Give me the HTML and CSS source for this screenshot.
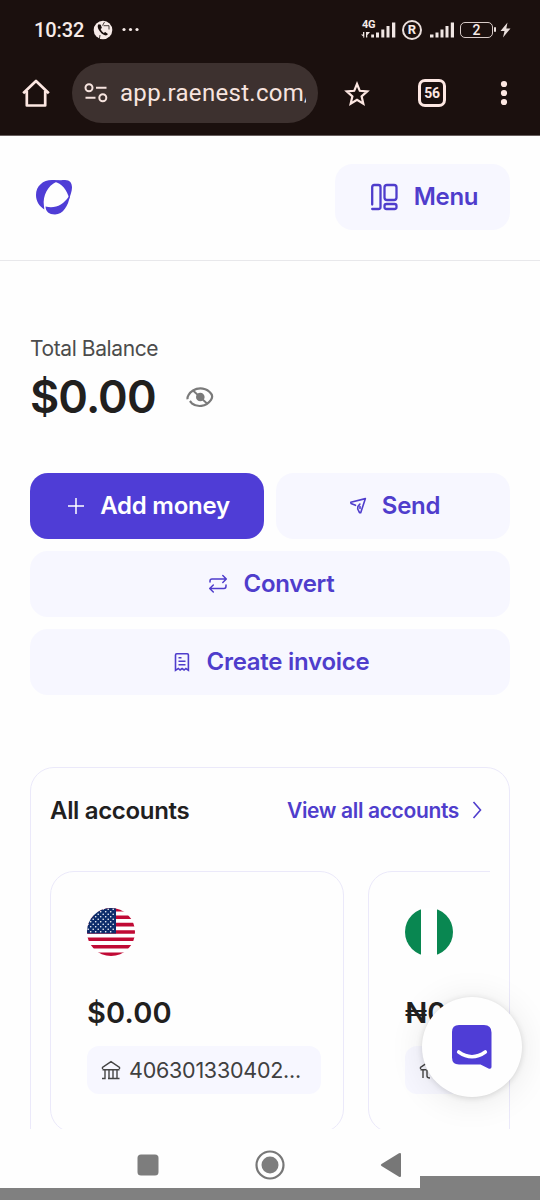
FILE: index.html
```
<!DOCTYPE html>
<html lang="en">
<head>
<meta charset="utf-8">
<title>Raenest</title>
<link rel="stylesheet" href="styles.css">
</head>
<body>
<div class="phone">
  <div class="status-bar">
    <span class="clock">10:32</span>
    <svg class="call-icon" width="20" height="20" viewBox="0 0 20 20"><circle cx="10" cy="10" r="9.3" fill="#f7ebe8"/><path d="M5.600 4.300c-1.300 1-1.200 3.200.3 5.700s3.800 4.800 6 5.300c1.500.3 2.600-.3 3-1.300l-2.700-2-1.500.9c-1.500-.9-2.600-2.300-3.100-3.800l1.300-1.200-1.100-3.200z" fill="#1b100e"/><path d="M9.500 5.500l2-3.500M10.500 5.700h5.500v3.800M7 15l-.6 4" stroke="#1b100e" stroke-width=".8" fill="none"/></svg>
    <svg class="dots-icon" width="20" height="6" viewBox="0 0 20 6" fill="#f7ebe8"><circle cx="3" cy="2.500" r="1.600"/><circle cx="9.500" cy="2.500" r="1.600"/><circle cx="16" cy="2.500" r="1.600"/></svg>
    <div class="indicators">
      <span class="network">
        <span class="network-label">4G</span>
        <svg width="35" height="18" viewBox="0 0 35 18" fill="#f0e6e3"><path d="M2 11h1.300v5.500H2zM0 13.500h3.300v3zM5 11h1.300v5.500H5zM5 11h4L6 14.500zM10.200 13.500h2.800v3h-2.800zM15 11.500h3v5h-3zM20.300 8.500h3v8h-3zM25.500 5h3v11.500h-3zM31 1.500h3.300v15H31z"/></svg>
      </span>
      <span class="roaming">R</span>
      <svg width="25" height="18" viewBox="0 0 25 18" fill="#f0e6e3"><path d="M0 13.500h3.500v3H0zM5.500 11.500h3v5h-3zM10.500 8.500h3v8h-3zM15.500 5h3v11.500h-3zM20.800 1.500H24v15h-3.200z"/></svg>
      <span class="battery">2</span>
      <svg class="bolt" width="11" height="16" viewBox="0 0 11 16"><path d="M7.500.5L.5 9h4L3 15.500 10.500 6.500H6.300z" fill="#e9dedb"/></svg>
    </div>
  </div>

  <div class="browser-bar">
    <svg class="home-icon" width="28" height="28" viewBox="0 0 28 28" fill="none" stroke="#fde7e2" stroke-width="2.700" stroke-linejoin="round"><path d="M1.200 14.300L14 2l12.800 12.300M4.800 12v14.500h18.400V12"/></svg>
    <div class="address">
      <svg width="24" height="20" viewBox="0 0 24 20" fill="none" stroke="#f7e4df" stroke-width="2"><circle cx="5" cy="4.700" r="3.500"/><path d="M12 4.700h10.500M1.500 14.800h10"/><circle cx="18.800" cy="14.800" r="3.500"/></svg>
      <span class="url">app.raenest.com/</span>
    </div>
    <svg class="star-icon" width="26" height="26" viewBox="0 0 26 26" fill="none" stroke="#fde7e2" stroke-width="2.200"><path d="M13 4l2.800 6.800 7.400.6-5.600 4.900 1.700 7.300-6.300-3.900-6.300 3.900 1.700-7.300-5.600-4.900 7.400-.6z"/></svg>
    <span class="tabs">56</span>
    <svg class="more-icon" width="8" height="26" viewBox="0 0 8 26" fill="#fde7e2"><circle cx="4" cy="4" r="3.100"/><circle cx="4" cy="13" r="3.100"/><circle cx="4" cy="22" r="3.100"/></svg>
  </div>

  <div class="page">
    <header class="site-header">
      <svg class="logo" width="38" height="38" viewBox="0 0 38 38" fill="#4f3dd6"><path d="M9.300 31.500C4 28 1 23 1 17 1 8 8 2 17 2c5 0 7 .7 11 .2L21 4C13 7.500 7.500 18 8.900 27.500z"/><path d="M18 2.200C25 3 26 1.900 30 2c5 0 7 3 7 7.500 0 4-2 8-2.600 11.500C32 12 27 5 19 3.700z"/><path d="M34.800 18C33.500 27.500 28 36.500 20 36.500c-6 0-9.200-2.800-9.500-8C20 31 28 27 33.800 18.500z"/></svg>
      <button class="menu">
        <svg width="28" height="28" viewBox="0 0 28 28" fill="none" stroke="#4f3dcc" stroke-width="2.300" stroke-linejoin="round" stroke-linecap="round"><path d="M2.200 21.500V4q0-2 2-2h4.300q2 0 2 2v20q0 2-2 2H2.200"/><rect x="14.500" y="2" width="12" height="15" rx="2.500"/><rect x="14.500" y="21" width="12" height="5" rx="2"/></svg>
        <span>Menu</span>
      </button>
    </header>

    <main class="content">
      <div class="balance-label">Total Balance</div>
      <div class="balance-row">
        <span class="balance">$0.00</span>
        <svg width="28" height="22" viewBox="0 0 28 22" fill="none" stroke="#7a7a7a" stroke-width="2.200"><path d="M1.600 13.300C1 11 3 7 7 4.500 13 .8 21 2 25 7.500q2.300 3 0 6.300C20 21 11 21.500 5.800 17.300L3.900 15"/><path d="M7 4.500L21 17.500" stroke-width="1.800"/><circle cx="14.300" cy="11" r="4.300" fill="#7a7a7a" stroke="none"/></svg>
      </div>

      <div class="actions">
        <button class="action primary"><svg width="18" height="18" viewBox="0 0 18 18" fill="none" stroke="#fff" stroke-width="1.500"><path d="M9 1v16M1 9h16"/></svg><span>Add money</span></button>
        <button class="action send"><svg width="18" height="18" viewBox="0 0 18 18" fill="none" stroke="#4f3dcc" stroke-width="1.600" stroke-linejoin="round" stroke-linecap="round"><path d="M6.500 8.300L2 6.400 1.800 5.200 16.400 1.600 11.700 15.700h-1.200L8.700 12l.2-2.500 2-2.500M11 9.500v2"/></svg><span>Send</span></button>
        <button class="action wide"><svg width="20" height="20" viewBox="0 0 20 20" fill="none" stroke="#4f3dcc" stroke-width="1.500" stroke-linecap="round" stroke-linejoin="round"><path d="M2 8V7q0-2 2-2h14M14.800 1.500L18.300 5l-3.500 3.500M18 11v1q0 2.500-2 2.500H2M5.300 11l-3.600 3.500L5.300 18"/></svg><span>Convert</span></button>
        <button class="action wide"><svg width="18" height="20" viewBox="0 0 18 20" fill="none" stroke="#4f3dcc" stroke-width="1.600"><path d="M2.500 18.300V3q0-1.200 1.200-1.200h10.500q1.200 0 1.200 1.200v15.300l-2.500-1.800-1.800 1.500-2-1.500-2 1.500-1.800-1.500zM5.500 5.700h3M5.500 9.200h7M5.500 12.700h7"/></svg><span>Create invoice</span></button>
      </div>

      <section class="accounts">
        <div class="accounts-head">
          <h2>All accounts</h2>
          <a class="view-all"><span>View all accounts</span><svg width="12" height="20" viewBox="0 0 12 20" fill="none" stroke="#4f3dcc" stroke-width="1.600"><path d="M1.500 2l7 8-7 8"/></svg></a>
        </div>
        <div class="cards">
          <article class="card">
            <svg class="flag" width="48" height="48" viewBox="0 0 48 48">
              <defs><clipPath id="round"><circle cx="24" cy="24" r="24"/></clipPath><pattern id="stars" width="5" height="5" patternUnits="userSpaceOnUse"><circle cx="1.200" cy="1.200" r=".8" fill="#fff"/><circle cx="3.700" cy="3.700" r=".8" fill="#fff"/></pattern></defs>
              <g clip-path="url(#round)"><path fill="#fff" d="M0 0h48v48H0z"/><path stroke="#c00a35" stroke-width="3.600" d="M0 1.800h48M0 9.200h48M0 16.600h48M0 24h48M0 31.300h48M0 38.700h48M0 46.200h48"/><path fill="#0d2c6b" d="M0 0h29v25.500H0z"/><path fill="url(#stars)" d="M0 0h28v25H0z"/></g>
            </svg>
            <div class="amount">$0.00</div>
            <div class="number"><svg width="20" height="20" viewBox="0 0 20 20" fill="none" stroke="#454545" stroke-width="1.400"><path d="M1.500 9V7.300L10 1.700l8.500 5.600V9M1.500 9.700h17M4 10v8M8 10v8M12 10v8M16 10v8M1 18.500h3.700M7 18.500h11.500"/></svg><span>406301330402...</span></div>
          </article>
          <article class="card">
            <svg class="flag" width="48" height="48" viewBox="0 0 48 48"><g clip-path="url(#round)"><path fill="#fff" d="M0 0h48v48H0z"/><path fill="#098751" d="M0 0h16v48H0zM32 0h16v48H32z"/></g></svg>
            <div class="amount">₦0.00</div>
            <div class="number"><svg width="20" height="20" viewBox="0 0 20 20" fill="none" stroke="#454545" stroke-width="1.400"><path d="M1.500 9V7.300L7 3.700M1.500 9.700h6M4 10v8M8 10v6q0 2 3 2"/></svg></div>
          </article>
        </div>
      </section>
    </main>

    <div class="chat"><svg width="42" height="46" viewBox="0 0 42 46"><path fill="#4f3dd6" d="M8 1h25q7.500 0 7.500 7.500V43q0 2.300-2.500 1.700L29.500 40.500H8Q1 40.500 1 33.500V8Q1 1 8 1z"/><path d="M7.700 28q13.300 9.500 26.600 0" fill="none" stroke="#fff" stroke-width="3.600" stroke-linecap="round"/></svg></div>
  </div>

  <nav class="system-nav">
    <svg width="22" height="22" viewBox="0 0 22 22"><rect x=".5" y=".5" width="21" height="21" rx="3.500" fill="#7d7d7d"/></svg>
    <svg width="30" height="30" viewBox="0 0 30 30"><circle cx="15" cy="15" r="13.500" fill="none" stroke="#777" stroke-width="2.200"/><circle cx="15" cy="15" r="8.500" fill="#7d7d7d"/></svg>
    <svg width="22" height="26" viewBox="0 0 22 26"><path d="M1.500 12L19 1.300q2-1 2 1v21.400q0 2-2 1L1.500 14q-1.500-1 0-2z" fill="#777"/></svg>
  </nav>
  <div class="bottom-edge"><span></span></div>
</div>
</body>
</html>
```

FILE: styles.css
```
* { box-sizing: border-box; }
body { margin: 0; background: #fefefe; font-family: Inter, "Liberation Sans", sans-serif; }
button { border: 0; padding: 0; font: inherit; }
svg { display: block; flex: none; }
.phone { width: 540px; height: 1200px; overflow: hidden; display: flex; flex-direction: column; }

.status-bar { height: 60px; flex: none; background: #1b100e; color: #f7ebe8; display: flex; align-items: center; padding: 0 29px 0 34px; font-family: Roboto, sans-serif; }
.clock { font-size: 20px; font-weight: 500; width: 59px; letter-spacing: -.1px; }
.dots-icon { margin-left: 8px; }
.indicators { margin-left: auto; display: flex; align-items: center; }
.network { width: 35px; margin-right: 6px; position: relative; }
.network-label { position: absolute; left: 1px; top: -2px; font-size: 11px; line-height: 12px; font-weight: 700; letter-spacing: -.3px; }
.roaming { width: 20px; height: 20px; border: 2px solid #e9dedb; border-radius: 50%; font-size: 13px; line-height: 16px; font-weight: 700; text-align: center; margin-right: 8px; }
.battery { position: relative; width: 33px; height: 16px; border: 1.500px solid #d8cbc8; border-radius: 5px; font-size: 14px; line-height: 14px; font-weight: 500; text-align: center; margin: 0 7px 0 5px; }
.battery::after { content: ""; position: absolute; right: -4px; top: 4px; width: 2px; height: 5px; background: #e9dedb; border-radius: 1px; }

.browser-bar { height: 76px; flex: none; background: #1b100e; border-bottom: 1px solid #675e5d; display: flex; align-items: center; padding: 0 32px 9px 22px; }
.address { width: 246px; height: 60px; margin-left: 22px; border-radius: 30px; background: #3d312f; display: flex; align-items: center; padding: 0 11px 0 12px; gap: 12px; }
.url { color: #f7e4df; font-family: Roboto, sans-serif; font-size: 24px; line-height: 34px; letter-spacing: .3px; width: 186px; overflow: hidden; white-space: nowrap; }
.star-icon { margin-left: 26px; }
.tabs { margin-left: 48px; width: 28px; height: 28px; border: 3px solid #fde7e2; border-radius: 7px; color: #fde7e2; font: 700 14px/23px Roboto, sans-serif; text-align: center; letter-spacing: -.3px; }
.more-icon { margin-left: 54px; }

.page { height: 993px; flex: none; overflow: hidden; position: relative; }
.site-header { height: 125px; border-bottom: 1px solid #e8e8eb; display: flex; align-items: center; justify-content: space-between; padding: 0 30px 2px 35px; }
.menu { width: 175px; height: 66px; border-radius: 18px; background: #f7f7ff; color: #4f3dcc; display: flex; align-items: center; justify-content: center; gap: 16px; font-size: 24px; font-weight: 600; letter-spacing: -.3px; padding: 0 0 1px 3px; }
.content { padding: 73px 30px 0; }
.balance-label { font-size: 21px; line-height: 30px; letter-spacing: -.4px; color: #4c4c4c; }
.balance-row { display: flex; align-items: center; gap: 30px; height: 66px; }
.balance { font-size: 45px; font-weight: 600; line-height: 66px; letter-spacing: -.9px; color: #21201e; }
.actions { display: grid; grid-template-columns: 234px 234px; gap: 12px; margin-top: 43px; }
.action { height: 66px; border-radius: 18px; background: #f7f7ff; color: #4f3dcc; display: flex; align-items: center; justify-content: center; gap: 15px; font-size: 24px; font-weight: 600; letter-spacing: -.26px; padding: 0 0 1px 3px; }
.primary { background: #4f3dd6; color: #fff; }
.wide { grid-column: span 2; }

.accounts { margin-top: 72px; height: 420px; border: 1.500px solid #ebe9fa; border-radius: 24px; padding: 0 19px; }
.accounts-head { height: 86px; display: flex; align-items: center; justify-content: space-between; padding: 0 6px 2px 0; }
.accounts h2 { margin: 0; font-size: 24px; font-weight: 600; letter-spacing: -.33px; color: #21201e; }
.view-all { display: flex; align-items: center; gap: 13px; color: #4f3dcc; font-size: 21px; font-weight: 600; letter-spacing: -.35px; }
.cards { display: flex; gap: 24px; margin-top: 17px; overflow: hidden; }
.card { width: 294px; height: 262px; flex: none; border: 1.500px solid #ebe9fa; border-radius: 24px; padding: 36px 22px 0 36px; }
.amount { font-size: 29px; line-height: 36px; font-weight: 600; letter-spacing: .2px; color: #21201e; margin-top: 39px; }
.number { height: 48px; margin-top: 15px; border-radius: 12px; background: #f7f7ff; color: #404040; display: flex; align-items: center; gap: 8px; padding-left: 14px; font-size: 21.500px; font-weight: 400; letter-spacing: -.25px; }
.chat { position: absolute; left: 422px; top: 861px; width: 100px; height: 100px; border-radius: 50%; background: #fefefe; display: grid; place-items: center; box-shadow: 0 1px 6px #0002, 0 3px 36px #00000017; }

.system-nav { height: 59px; flex: none; display: flex; align-items: center; padding: 12px 0 0 137px; gap: 96px; }
.system-nav svg:last-child { margin-left: -1px; }
.bottom-edge { height: 12px; flex: none; background: #808080; display: flex; justify-content: flex-end; align-items: flex-end; }
.bottom-edge span { width: 120px; height: 24px; background: #808080; flex: none; }
```
